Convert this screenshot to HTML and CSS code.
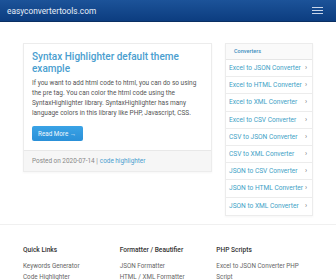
FILE: index.html
```html
<!DOCTYPE html>
<html>
<head>
<meta charset="utf-8">
<link rel="stylesheet" href="styles.css">
</head>
<body>
<nav class="navbar">
  <span class="brand">easyconvertertools.com</span>
  <span class="burger"><i></i><i></i><i></i></span>
</nav>
<div class="container">
  <div class="row">
    <article class="card">
      <div class="card-body">
        <h2 class="card-title">Syntax Highlighter default theme example</h2>
        <p class="card-text">If you want to add html code to html, you can do so using<br>the pre tag. You can color the html code using the<br>SyntaxHighlighter library. SyntaxHighlighter has many<br>language colors in this library like PHP, Javascript, CSS.</p>
        <span class="btn">Read More →</span>
      </div>
      <div class="card-footer">Posted on 2020-07-14 | <span class="link">code highlighter</span></div>
    </article>
    <aside class="panel">
      <div class="panel-head">Converters</div>
      <div class="item"><span>Excel to JSON Converter</span><span class="chev">›</span></div>
      <div class="item"><span>Excel to HTML Converter</span><span class="chev">›</span></div>
      <div class="item"><span>Excel to XML Converter</span><span class="chev">›</span></div>
      <div class="item"><span>Excel to CSV Converter</span><span class="chev">›</span></div>
      <div class="item"><span>CSV to JSON Converter</span><span class="chev">›</span></div>
      <div class="item"><span>CSV to XML Converter</span><span class="chev">›</span></div>
      <div class="item"><span>JSON to CSV Converter</span><span class="chev">›</span></div>
      <div class="item"><span>JSON to HTML Converter</span><span class="chev">›</span></div>
      <div class="item"><span>JSON to XML Converter</span><span class="chev">›</span></div>
    </aside>
  </div>
</div>
<footer class="footer">
  <div class="cols">
    <div class="col">
      <h4>Quick Links</h4>
      <p>Keywords Generator</p>
      <p>Code Highlighter</p>
    </div>
    <div class="col">
      <h4>Formatter / Beautifier</h4>
      <p>JSON Formatter</p>
      <p>HTML / XML Formatter</p>
    </div>
    <div class="col">
      <h4>PHP Scripts</h4>
      <p>Excel to JSON Converter PHP<br>Script</p>
    </div>
  </div>
</footer>
</body>
</html>
```
FILE: styles.css
```css
* { box-sizing: border-box; }
html, body { margin: 0; padding: 0; background: #fff; }
body { font-family: Roboto, "Liberation Sans", sans-serif; color: #555; }

.navbar {
  height: 22px;
  display: flex;
  align-items: center;
  justify-content: space-between;
  padding: 0 13px 0 7px;
  background: linear-gradient(#1c5399, #0c3d80);
  border-bottom: 1px solid #0a2f63;
}
.brand { color: #e6eef8; font-size: 8.3px; }
.burger { display: flex; flex-direction: column; gap: 2.2px; width: 11px; }
.burger i { display: block; height: 1.2px; background: #c9d6ea; }

.container { padding: 21px 23px 0 23px; }
.row { display: flex; gap: 13px; align-items: flex-start; }

.card {
  width: 189px;
  border: 1px solid #ececec;
  box-shadow: 0 1px 2px rgba(0,0,0,0.04);
}
.card-body { padding: 7px 8px 9px 8px; }
.card-title {
  margin: 0;
  font-size: 10px;
  line-height: 11.5px;
  font-weight: 500;
  color: #4a9ecf;
}
.card-text {
  margin: 4px 0 0 0;
  font-size: 6.5px;
  line-height: 10px;
  color: #555;
  white-space: nowrap;
}
.btn {
  display: inline-flex;
  align-items: center;
  margin-top: 8px;
  height: 15px;
  width: 51px;
  padding-left: 6px;
  border-radius: 2px;
  background: linear-gradient(#3aa3e6, #2a90d8);
  color: #f0f7fd;
  font-size: 6.3px;
}
.card-footer {
  height: 21px;
  display: flex;
  align-items: center;
  padding-left: 8px;
  background: #f6f6f6;
  border-top: 1px solid #e8e8e8;
  font-size: 6.4px;
  color: #888;
}
.link { color: #4a9ecf; margin-left: 2px; }

.panel {
  width: 88px;
  border: 1px solid #ececec;
  box-shadow: 0 1px 2px rgba(0,0,0,0.04);
}
.panel-head {
  height: 16px;
  display: flex;
  align-items: center;
  padding: 0 0 2px 8px;
  background: #fafafa;
  border-bottom: 1px solid #e6e6e6;
  font-size: 5.5px;
  font-weight: 500;
  color: #3e8fbf;
}
.item {
  height: 17.2px;
  display: flex;
  align-items: center;
  justify-content: space-between;
  padding: 0 5px 0 3px;
  border-bottom: 1px solid #ececec;
  font-size: 6.6px;
  color: #3e9fc6;
}
.item:last-child { border-bottom: 0; }
.chev { color: #777; font-size: 7px; }

.footer {
  margin-top: 8px;
  border-top: 1px solid #f0f0f0;
  padding: 20px 23px 0 23px;
}
.cols { display: flex; }
.col { width: 101px; }
.col h4 {
  margin: 0 0 6px 0;
  font-size: 6.6px;
  line-height: 10px;
  font-weight: 500;
  color: #333;
}
.col p {
  margin: 0;
  font-size: 6.3px;
  line-height: 11px;
  color: #666;
}
```
